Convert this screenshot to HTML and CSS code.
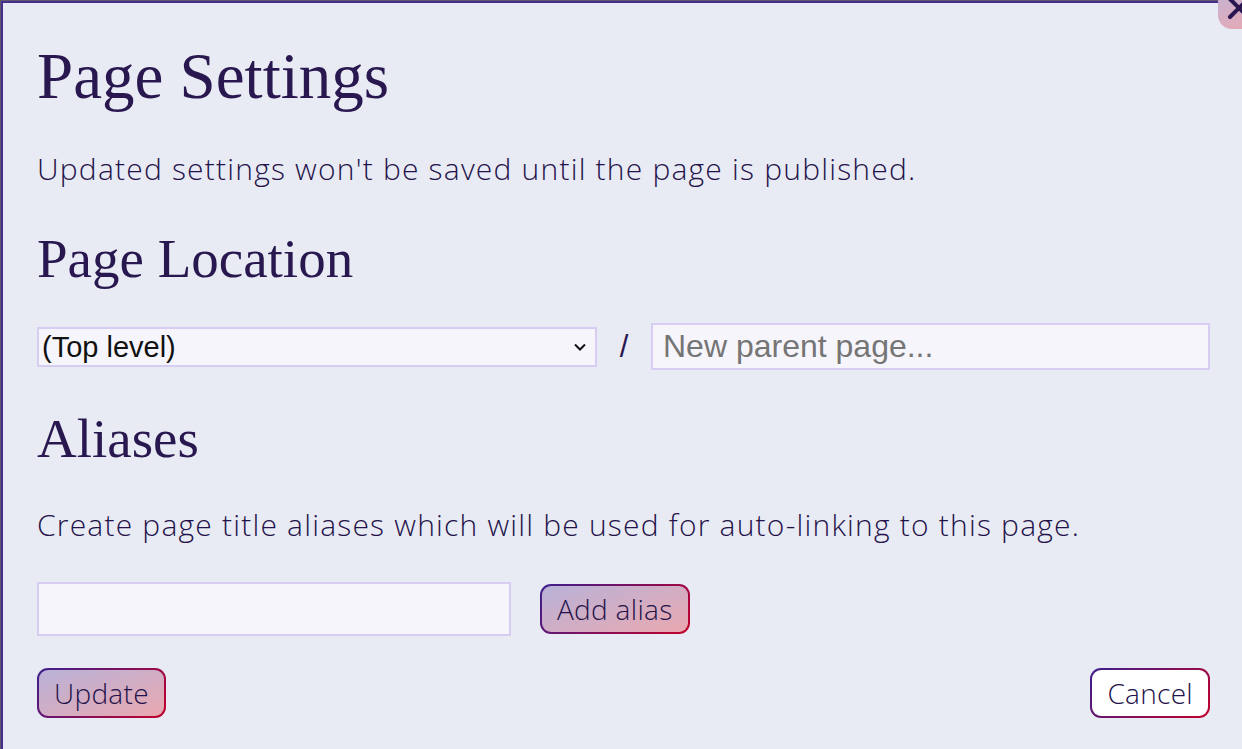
FILE: index.html
```html
<!DOCTYPE html>
<html lang="en">
<head>
<meta charset="utf-8">
<title>Page Settings</title>
<link rel="stylesheet" href="styles.css">
</head>
<body>
<div class="dialog">
  <button class="close-btn" aria-label="Close">
    <svg width="42" height="42" viewBox="0 0 42 42"><path d="M12 12 L30 30 M30 12 L12 30" stroke="#2a1650" stroke-width="4" stroke-linecap="round"/></svg>
  </button>
  <h1 class="title">Page Settings</h1>
  <p class="note">Updated settings won't be saved until the page is published.</p>
  <h2 class="section">Page Location</h2>
  <div class="location-row">
    <div class="select-wrap">
      <select class="parent-select"><option>(Top level)</option></select>
      <svg class="chev" width="14" height="10" viewBox="0 0 14 10"><path d="M2 2.5 L7 7.5 L12 2.5" fill="none" stroke="#111" stroke-width="2"/></svg>
    </div>
    <span class="slash">/</span>
    <input class="parent-input" type="text" placeholder="New parent page...">
  </div>
  <h2 class="section aliases">Aliases</h2>
  <p class="note note2">Create page title aliases which will be used for auto-linking to this page.</p>
  <div class="alias-row">
    <input class="alias-input" type="text">
    <button class="btn grad">Add alias</button>
  </div>
  <div class="actions">
    <button class="btn grad">Update</button>
    <button class="btn plain">Cancel</button>
  </div>
</div>
</body>
</html>
```
FILE: styles.css
```css
html, body {
  margin: 0;
  padding: 0;
  height: 100%;
  overflow: hidden;
}
body {
  background: #5e5a6e;
  padding: 1px 0 0 1px;
  box-sizing: border-box;
}
.dialog {
  position: relative;
  box-sizing: border-box;
  height: 760px;
  background: #e9ebf4;
  border-top: 2px solid #4a2c8c;
  border-left: 2px solid #4a2c8c;
  padding: 0 32px 0 34px;
  color: #24134a;
  font-family: "Open Sans", Lato, sans-serif;
}
.close-btn {
  position: absolute;
  top: -16px;
  right: -18px;
  width: 42px;
  height: 42px;
  padding: 0;
  border: none;
  border-radius: 14px;
  background: linear-gradient(160deg, #c0b4d8, #e8a8b2);
}
.close-btn svg { display: block; }
.title {
  margin: 0;
  padding-top: 35px;
  font-family: "Liberation Serif", serif;
  font-weight: 400;
  font-size: 65px;
  line-height: 76px;
  color: #29184f;
}
.note {
  margin: 37px 0 0;
  font-size: 30px;
  font-weight: 300;
  letter-spacing: 1.2px;
  line-height: 36px;
}
.section {
  margin: 39px 0 0;
  font-family: "Liberation Serif", serif;
  font-weight: 400;
  font-size: 55px;
  line-height: 66px;
  color: #29184f;
}
.location-row {
  display: flex;
  align-items: center;
  margin-top: 31px;
}
.select-wrap {
  position: relative;
  width: 560px;
}
.parent-select {
  appearance: none;
  -webkit-appearance: none;
  box-sizing: border-box;
  width: 100%;
  height: 40px;
  border: 2px solid #d7ccf2;
  border-radius: 0;
  background: #f6f5fb;
  font-family: "Liberation Sans", Arial, sans-serif;
  font-size: 29px;
  line-height: 36px;
  color: #111;
  padding: 0 3px;
}
.chev {
  position: absolute;
  right: 10px;
  top: 15px;
  pointer-events: none;
}
.slash {
  width: 54px;
  text-align: center;
  font-family: "Liberation Sans", Arial, sans-serif;
  font-size: 31px;
  color: #29184f;
}
.parent-input {
  flex: 1;
  box-sizing: border-box;
  height: 47px;
  border: 2px solid #d7ccf2;
  background: #f6f5fb;
  font-family: "Liberation Sans", Arial, sans-serif;
  font-size: 32px;
  padding: 0 10px;
  outline: none;
}
.parent-input::placeholder { color: #757575; }
.aliases { margin-top: 36px; }
.note2 { margin-top: 35px; }
.alias-row {
  display: flex;
  align-items: center;
  gap: 29px;
  margin-top: 39px;
}
.alias-input {
  box-sizing: border-box;
  width: 474px;
  height: 54px;
  border: 2px solid #d7ccf2;
  background: #f6f5fb;
}
.btn {
  box-sizing: border-box;
  height: 50px;
  padding: 0 15px;
  border: 2px solid transparent;
  border-radius: 11px;
  font-family: "Open Sans", Lato, sans-serif;
  font-weight: 300;
  font-size: 28px;
  letter-spacing: 0.3px;
  color: #24134a;
}
.grad {
  background:
    linear-gradient(160deg, #b9b2d8, #e9a8b0) padding-box,
    linear-gradient(135deg, #3c1f8e, #c3002a) border-box;
}
.plain {
  background:
    linear-gradient(#ffffff, #ffffff) padding-box,
    linear-gradient(135deg, #3c1f8e, #c3002a) border-box;
}
.actions {
  display: flex;
  justify-content: space-between;
  margin-top: 32px;
}
```
